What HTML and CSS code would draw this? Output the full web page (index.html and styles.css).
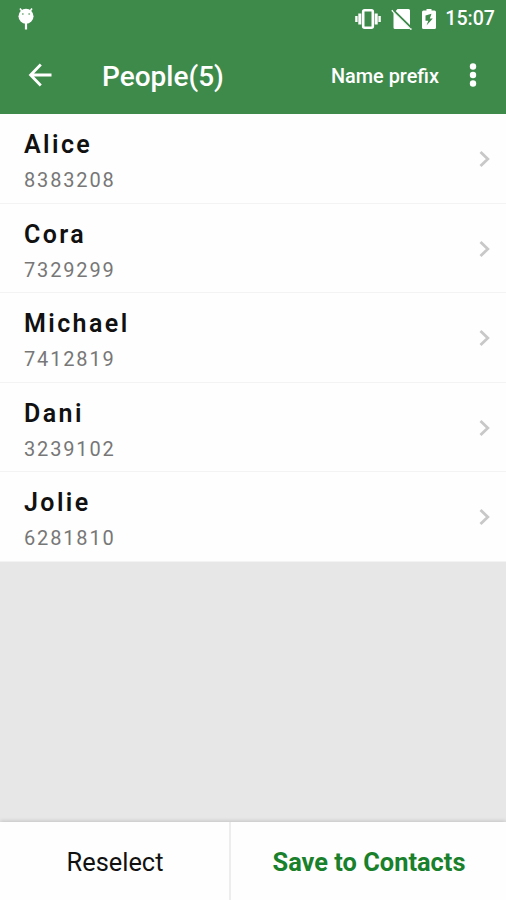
FILE: index.html
```html
<!DOCTYPE html>
<html lang="en">
<head>
  <meta charset="UTF-8" />
  <meta name="viewport" content="width=device-width, initial-scale=1.0" />
  <title>People</title>
  <link rel="stylesheet" href="styles.css">
</head>
<body>

  <header class="header">
    <div class="status-bar">
      <svg class="icon-droid" width="18" height="24" viewBox="0 0 18 24">
        <path d="M3 1.5 L5.2 4.5 M15 1.5 L12.8 4.5" stroke="#fff" stroke-width="1.6" />
        <circle cx="9" cy="9.2" r="7.5" fill="#fff" />
        <path d="M9 15 V22.5" stroke="#fff" stroke-width="2.2" />
        <circle cx="5.8" cy="7" r="1" fill="#8dba95" />
        <circle cx="12.2" cy="7" r="1" fill="#8dba95" />
      </svg>
      <div class="status-icons">
        <svg class="icon-vibrate" width="28" height="22" viewBox="0 0 28 22">
          <rect x="9.2" y="2.3" width="9.6" height="17.4" rx="1.4" fill="none" stroke="#fff" stroke-width="2.6" />
          <path d="M5.8 5.5 V16.5 M22.2 5.5 V16.5" stroke="#fff" stroke-width="3" />
          <path d="M2.4 8 V14 M25.6 8 V14" stroke="#fff" stroke-width="2.4" />
        </svg>
        <svg class="icon-sim" width="22" height="22" viewBox="0 0 22 22">
          <path d="M4.5 3.2 L6.5 1 H17.5 Q19 1 19 2.5 V17.6 Z" fill="#fff" />
          <path d="M2.5 4.5 L18.8 20.5 Q18 21 17 21 H4 Q2.5 21 2.5 19.5 Z" fill="#fff" />
          <path d="M0.8 2.3 L20.4 21.6" stroke="#fff" stroke-width="1.6" />
          <path d="M2.5 2.1 L20.5 19.8" stroke="#3e8a4b" stroke-width="1.7" />
        </svg>
        <svg class="icon-battery" width="14" height="22" viewBox="0 0 14 22">
          <path d="M4.5 1 H9.5 V2.5 H12.5 Q14 2.5 14 4 V19.5 Q14 21 12.5 21 H1.5 Q0 21 0 19.5 V4 Q0 2.5 1.5 2.5 H4.5 Z" fill="#fff" />
          <path d="M9.5 5.8 L3.5 7.5 V12.7 H6.3 L4.5 17.5 L10.8 10.5 H7.8 Z" fill="#3e8a4b" />
        </svg>
        <span class="time">15:07</span>
      </div>
    </div>

    <div class="toolbar">
      <svg class="icon-back" width="24" height="24" viewBox="0 0 24 24">
        <path d="M12.8 1.5 L2.6 12 L12.8 22.5 M2.6 12 H23.5" fill="none" stroke="#fff" stroke-width="2.8" />
      </svg>
      <h1>People(5)</h1>
      <span class="prefix">Name prefix</span>
      <svg class="icon-more" width="8" height="24" viewBox="0 0 8 24">
        <circle cx="4" cy="3.5" r="3.2" fill="#fff" />
        <circle cx="4" cy="12" r="3.2" fill="#fff" />
        <circle cx="4" cy="20.5" r="3.2" fill="#fff" />
      </svg>
    </div>
  </header>

  <ul class="people">
    <li class="person">
      <div class="info">
        <div class="name">Alice</div>
        <div class="number">8383208</div>
      </div>
      <svg class="chevron" width="12" height="18" viewBox="0 0 12 18"><path d="M1.5 2 L8.8 9 L1.5 16" /></svg>
    </li>
    <li class="person">
      <div class="info">
        <div class="name">Cora</div>
        <div class="number">7329299</div>
      </div>
      <svg class="chevron" width="12" height="18" viewBox="0 0 12 18"><path d="M1.5 2 L8.8 9 L1.5 16" /></svg>
    </li>
    <li class="person">
      <div class="info">
        <div class="name">Michael</div>
        <div class="number">7412819</div>
      </div>
      <svg class="chevron" width="12" height="18" viewBox="0 0 12 18"><path d="M1.5 2 L8.8 9 L1.5 16" /></svg>
    </li>
    <li class="person">
      <div class="info">
        <div class="name">Dani</div>
        <div class="number">3239102</div>
      </div>
      <svg class="chevron" width="12" height="18" viewBox="0 0 12 18"><path d="M1.5 2 L8.8 9 L1.5 16" /></svg>
    </li>
    <li class="person">
      <div class="info">
        <div class="name">Jolie</div>
        <div class="number">6281810</div>
      </div>
      <svg class="chevron" width="12" height="18" viewBox="0 0 12 18"><path d="M1.5 2 L8.8 9 L1.5 16" /></svg>
    </li>
  </ul>

  <footer class="actions">
    <button class="reselect">Reselect</button>
    <button class="save">Save to Contacts</button>
  </footer>

</body>
</html>
```
FILE: styles.css
```css
* {
  box-sizing: border-box;
}

body {
  font-family: Roboto, sans-serif;
  background-color: #e7e7e7;
  color: #111;
  margin: 0;
  height: 100vh;
  display: flex;
  flex-direction: column;
  overflow: hidden;
}

svg {
  display: block;
  flex: none;
}

.header {
  height: 114px;
  background-color: #3e8a4b;
  color: #fff;
  flex: none;
}

.status-bar {
  height: 37px;
  display: flex;
  justify-content: space-between;
  align-items: center;
  padding: 0 11px 0 17px;
}

.status-icons {
  display: flex;
  align-items: center;
}

.icon-sim {
  margin-left: 9px;
}

.icon-battery {
  margin-left: 9px;
}

.time {
  margin-left: 9px;
  font-size: 19.6px;
  font-weight: 500;
  line-height: 24px;
  padding-top: 1px;
}

.toolbar {
  height: 76px;
  display: flex;
  align-items: center;
  padding: 0 29px 0 28px;
}

h1 {
  margin: 0 auto 0 50px;
  padding-top: 3px;
  font-size: 28px;
  font-weight: 500;
  line-height: 34px;
}

.prefix {
  font-size: 19.9px;
  font-weight: 500;
  margin-right: 30px;
  padding-top: 2px;
}

.people {
  list-style: none;
  margin: 0;
  padding: 0;
  flex: none;
}

.person {
  height: 89.5px;
  display: flex;
  justify-content: space-between;
  align-items: center;
  padding: 2px 15px 0 24px;
  background-color: #fefefe;
  border-bottom: 1px solid #f3f3f3;
}

.info {
  padding-top: 7px;
}

.name {
  font-size: 25px;
  font-weight: 600;
  line-height: 36px;
  letter-spacing: 2.4px;
}

.number {
  font-size: 20px;
  line-height: 35px;
  letter-spacing: 1.85px;
  color: #777;
}

.chevron path {
  fill: none;
  stroke: #c8c8c8;
  stroke-width: 2.8;
}

.actions {
  display: flex;
  height: 78px;
  margin-top: auto;
  background-color: #fefefe;
  box-shadow: 0 -1px 4px rgba(0, 0, 0, 0.16);
}

.actions button {
  border: none;
  background: none;
  padding: 2px 0 0 1px;
  font-family: inherit;
  font-size: 25.4px;
}

.actions .reselect {
  width: 231px;
  color: #111;
  border-right: 2px solid #ededed;
}

.actions .save {
  flex: 1;
  color: #19802b;
  font-weight: 700;
}
```
